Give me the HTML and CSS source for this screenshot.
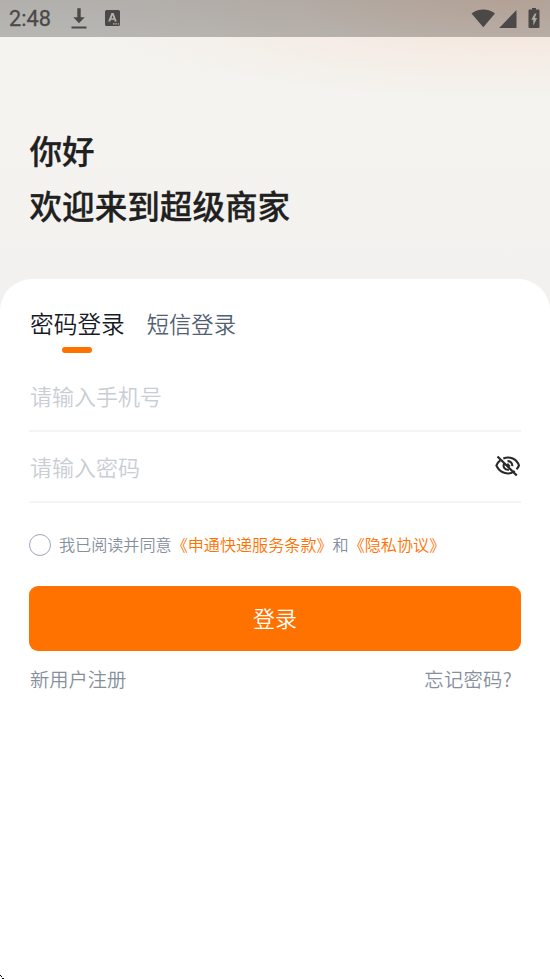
FILE: index.html
```html
<!DOCTYPE html>
<html lang="zh-CN">
<head>
<meta charset="utf-8">
<title>登录</title>
<link rel="stylesheet" href="styles.css">
</head>
<body>
<div class="screen">
  <header class="status">
    <span class="time">2:48</span>
    <svg class="download" width="16" height="22" viewBox="0 0 16 22"><path d="M6.300.3h3.400v9h4L8 15.300 2.300 9.300h4zM.5 18.500h15v2H.5z"/></svg>
    <svg class="keyboard" width="15" height="16" viewBox="0 0 14 16" preserveAspectRatio="none"><path fill-rule="evenodd" d="M1.500 0h11Q14 0 14 1.500v13q0 1.500-1.500 1.500h-11Q0 16 0 14.500v-13Q0 0 1.500 0zM6 3 3 11.500h1.900l.5-1.700h3.200l.5 1.700H11L8 3zm1 2.200.9 3.100H6.100zM7.500 13.300v1.200H9v-1.200zm2.200 0v1.200h1.400v-1.200zm2.200 0v1.200H13v-1.200z"/></svg>
    <svg class="signals" width="72" height="22" viewBox="0 0 72 22"><path fill-rule="evenodd" d="M.5 5.500C7 .3 17.500.3 24 5.500L12.300 19.300zM45.500 2v18H28.200zM61 1.600V0h4v1.600h2.500q1 0 1 1V19q0 1-1 1h-9q-1 0-1-1V2.600q0-1 1-1zM63.700 5.500l-3.400 6.200h2v5.800l3.800-7.500h-2.300l1.700-4.500z"/></svg>
  </header>
  <h1 class="welcome">你好<br>欢迎来到超级商家</h1>
  <main class="card">
    <nav class="tabs"><a class="tab active">密码登录</a><a class="tab">短信登录</a></nav>
    <div class="field"><span>请输入手机号</span></div>
    <div class="field"><span>请输入密码</span>
      <svg class="eye" width="26" height="22" viewBox="0 0 26 22"><g fill="none" stroke="#292929" stroke-width="2.100"><path d="M5.300 5.300C3.300 6.600 2.100 8.500 1.400 10.500 5.200 19 14.400 20.300 19.700 16M8.300 3.500C15 .8 21.600 4 24 10.500c-.6 1.400-1.400 2.600-2.500 3.700M9.300 8.200c-2 3.700.7 7 4.600 6.500M12.500 6.200c2.900-.3 5.100 2 4.700 5M12.200 8.800l2.600 2.800"/><path d="M2.500 1.500 21.800 20.500" stroke-width="2.200"/></g></svg>
    </div>
    <div class="agreement"><i class="radio"></i><span>我已阅读并同意<b>《申通快递服务条款》</b>和<b>《隐私协议》</b></span></div>
    <div class="login">登录</div>
    <div class="links"><span>新用户注册</span><span class="forgot">忘记密码?</span></div>
  </main>
  <svg class="corner" width="4" height="4" viewBox="0 0 4 4"><path d="M0 0h1v1H0zM1 1h1v1H1zM2 3h2v1H2z"/></svg>
</div>
</body>
</html>
```
FILE: styles.css
```css
* { box-sizing: border-box; }
body { margin: 0; font-family: "Noto Sans CJK SC", sans-serif; font-weight: 350; }
.screen {
  position: relative;
  width: 550px;
  height: 979px;
  overflow: hidden;
  display: flex;
  flex-direction: column;
  background:
    radial-gradient(ellipse 440px 100px at 510px 0, rgba(246, 218, 200, .85), rgba(246, 226, 214, .45) 50%, transparent),
    linear-gradient(#f4f3ef, #f4f3ef 150px, #f2f1ef 280px);
}
.status {
  height: 37px;
  flex: none;
  display: flex;
  align-items: flex-start;
  padding: 8px 7px 0 9px;
  background: linear-gradient(rgba(90, 70, 60, .05), transparent), rgba(0, 0, 0, .25);
}
.status svg { fill: #4b4947; flex: none; }
.time { width: 62px; font: 400 21.7px/22px Roboto, sans-serif; color: #4b4947; -webkit-text-stroke: .3px #4b4947; }
.download { margin-right: 18px; }
.keyboard { margin-top: 2px; }
.signals { margin-left: auto; }
.welcome {
  height: 242px;
  flex: none;
  margin: 0;
  padding: 85px 29px 0 29.5px;
  font-size: 32.6px;
  font-weight: 500;
  line-height: 55px;
  color: #202020;
  -webkit-text-stroke: .3px #202020;
}
.card { flex: 1; padding: 22px 29px 0; border-radius: 32px 32px 0 0; background: #fff; }
.tabs { display: flex; align-items: flex-start; gap: 22px; height: 60px; padding-left: 1px; }
.tab { font-size: 22.3px; line-height: 44px; color: #536073; }
.tab.active { font-size: 23.7px; color: #161b26; }
.tab.active::after {
  content: "";
  display: block;
  width: 30px;
  height: 6px;
  margin: 2px auto 0;
  border-radius: 3px;
  background: #ff7200;
}
.field {
  height: 71px;
  display: flex;
  align-items: center;
  justify-content: space-between;
  padding: 0 0 2px 1px;
  border-bottom: 2px solid #f4f4f5;
  font-size: 22px;
  color: #c9cdd4;
}
.agreement { display: flex; align-items: center; height: 83px; gap: 8px; font-size: 16.1px; color: #86909c; }
.agreement span { padding-bottom: 1px; }
.agreement b { font-weight: inherit; color: #ff7200; }
.radio { width: 22px; height: 22px; border: 1.5px solid #a4a3bf; border-radius: 50%; }
.login {
  height: 65px;
  border-radius: 9px;
  background: #ff7200;
  color: #fff;
  font-size: 22px;
  line-height: 63px;
  text-align: center;
}
.links { display: flex; justify-content: space-between; padding: 0 9px 0 1px; font-size: 19.3px; line-height: 57px; color: #86909c; }
.forgot { letter-spacing: .3px; }
.corner { position: absolute; left: 0; bottom: 0; }
```
